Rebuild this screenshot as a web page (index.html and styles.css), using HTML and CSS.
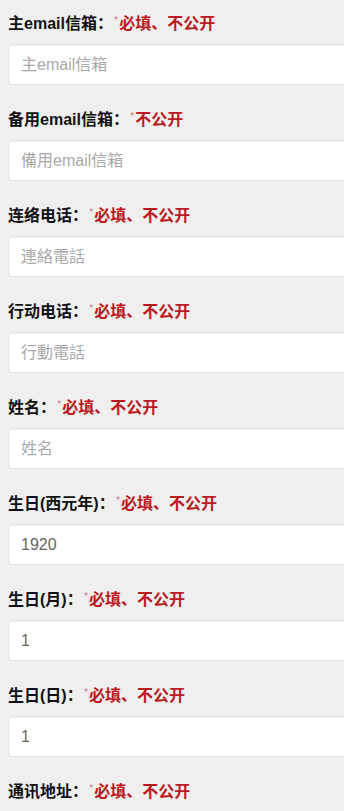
FILE: index.html
```html
<!DOCTYPE html>
<html lang="zh">
<head>
<meta charset="utf-8">
<title>表单</title>
<link rel="stylesheet" href="styles.css">
</head>
<body>
<form class="form">
  <div class="group">
    <label class="label">主email信箱：<span class="star">*</span><span class="req">必填、不公开</span></label>
    <input class="field" type="text" placeholder="主email信箱">
  </div>
  <div class="group">
    <label class="label">备用email信箱：<span class="star">*</span><span class="req">不公开</span></label>
    <input class="field" type="text" placeholder="備用email信箱">
  </div>
  <div class="group">
    <label class="label">连络电话：<span class="star">*</span><span class="req">必填、不公开</span></label>
    <input class="field" type="text" placeholder="連絡電話">
  </div>
  <div class="group">
    <label class="label">行动电话：<span class="star">*</span><span class="req">必填、不公开</span></label>
    <input class="field" type="text" placeholder="行動電話">
  </div>
  <div class="group">
    <label class="label">姓名：<span class="star">*</span><span class="req">必填、不公开</span></label>
    <input class="field" type="text" placeholder="姓名">
  </div>
  <div class="group">
    <label class="label">生日(西元年)：<span class="star">*</span><span class="req">必填、不公开</span></label>
    <input class="field" type="text" value="1920">
  </div>
  <div class="group">
    <label class="label">生日(月)：<span class="star">*</span><span class="req">必填、不公开</span></label>
    <input class="field" type="text" value="1">
  </div>
  <div class="group">
    <label class="label">生日(日)：<span class="star">*</span><span class="req">必填、不公开</span></label>
    <input class="field" type="text" value="1">
  </div>
  <div class="group">
    <label class="label">通讯地址：<span class="star">*</span><span class="req">必填、不公开</span></label>
    <input class="field" type="text" placeholder="通訊地址">
  </div>
</form>
</body>
</html>
```

FILE: styles.css
```css
html, body {
  margin: 0;
  padding: 0;
  overflow: hidden;
  background: #efefef;
}

body {
  font-family: "Liberation Sans", "Noto Sans CJK SC", sans-serif;
  font-size: 16px;
  color: #111;
}

.form {
  padding: 12px 0 0 8px;
}

.group {
  display: flex;
  flex-direction: column;
  gap: 8px;
  height: 73px;
  margin-bottom: 23px;
}

.label {
  display: block;
  height: 24px;
  overflow: hidden;
  font-weight: bold;
  font-size: 16px;
  line-height: 24px;
  color: #111;
  white-space: nowrap;
}

.star {
  font-weight: normal;
  font-size: 11px;
  color: #c88;
  vertical-align: top;
  margin-left: 1px;
  margin-right: 1px;
  line-height: 16px;
}

.req {
  color: #bb1a22;
  font-weight: bold;
}

.field {
  box-sizing: border-box;
  flex: none;
  width: 360px;
  height: 41px;
  margin: 0;
  padding: 0 12px;
  border: 1px solid #e2e2e2;
  border-radius: 4px;
  background: #fff;
  box-shadow: inset 0 1px 1px rgba(0, 0, 0, 0.05);
  font-family: "Liberation Sans", "Noto Sans CJK SC", sans-serif;
  font-size: 16px;
  color: #666;
  outline: none;
}

.field::placeholder {
  color: #aaa;
}
```
